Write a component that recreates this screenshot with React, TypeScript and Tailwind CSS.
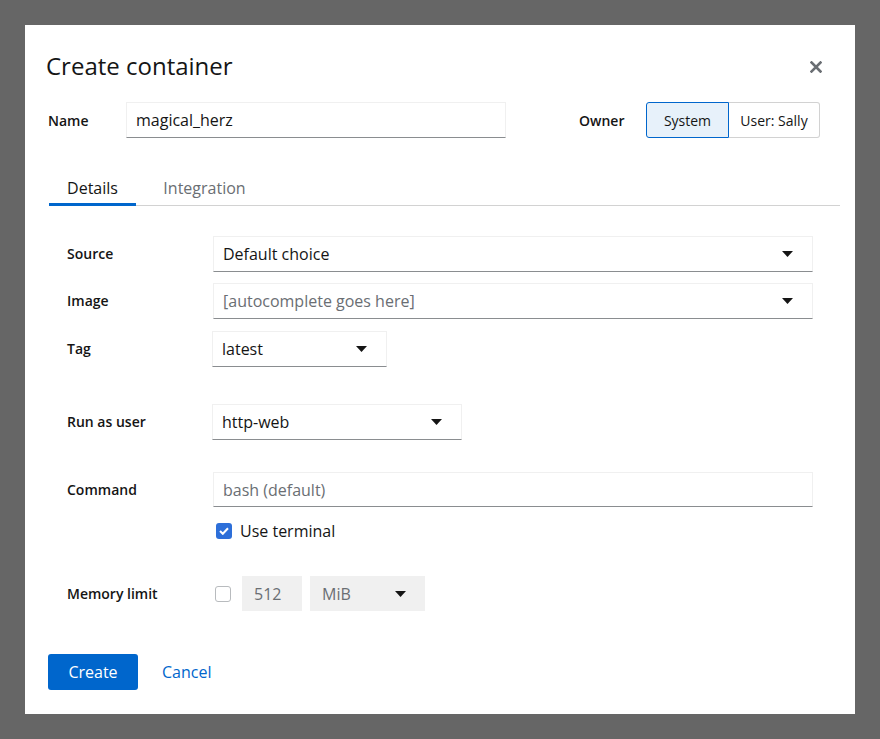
import React from "react";

const Caret = () => (
  <svg width="11" height="6" viewBox="0 0 11 6" className="fill-[#151515]">
    <path d="M0 0h11L5.5 6z" />
  </svg>
);

const fieldBorder =
  "border border-[#f0f0f0] border-b-[#8a8d90] bg-white";

type SelectProps = {
  value: string;
  className?: string;
  placeholder?: boolean;
};

const Select = ({ value, className = "", placeholder }: SelectProps) => (
  <div
    className={`flex h-[36px] items-center justify-between pl-[9px] pr-[19px] ${fieldBorder} ${className}`}
  >
    <span className={placeholder ? "text-[#6a6e73]" : "text-[#151515]"}>
      {value}
    </span>
    <Caret />
  </div>
);

const Label = ({ children }: { children: React.ReactNode }) => (
  <div className="w-[146px] shrink-0 text-[14px] font-semibold text-[#151515]">
    {children}
  </div>
);

export default function App() {
  return (
    <div
      className="h-[739px] w-[880px] bg-[#666666] p-[25px]"
      style={{ fontFamily: '"Open Sans", "Liberation Sans", sans-serif' }}
    >
      <div className="relative h-[689px] w-[830px] bg-white px-[23px] pt-[24px] text-[16px] text-[#151515]">
        {/* header */}
        <div className="flex items-center justify-between">
          <h1 className="-ml-[2px] text-[24px] leading-[34px] text-[#151515]">
            Create container
          </h1>
          <button className="mr-[10px] mt-[2px] text-[#6a6e73]">
            <svg width="12" height="12" viewBox="0 0 12 12">
              <path
                d="M1.5 1.5l9 9M10.5 1.5l-9 9"
                stroke="currentColor"
                strokeWidth="2.6"
                strokeLinecap="square"
              />
            </svg>
          </button>
        </div>

        {/* name + owner */}
        <div className="mt-[19px] flex items-center">
          <div className="w-[78px] text-[14px] font-semibold">Name</div>
          <div
            className={`flex h-[36px] w-[380px] items-center px-[9px] ${fieldBorder}`}
          >
            magical_herz
          </div>
          <div className="ml-[73px] w-[67px] text-[14px] font-semibold">
            Owner
          </div>
          <div className="flex h-[36px] text-[14px]">
            <div className="flex w-[83px] items-center justify-center rounded-l-[3px] border border-[#0066cc] bg-[#e7f1fa]">
              System
            </div>
            <div className="flex w-[91px] items-center justify-center rounded-r-[3px] border border-l-0 border-[#d2d2d2]">
              User: Sally
            </div>
          </div>
        </div>

        {/* tabs */}
        <div className="mt-[32px] mr-[-8px] ml-[1px] flex h-[36px] border-b border-[#d2d2d2]">
          <div className="relative flex w-[87px] items-center justify-center text-[#151515]">
            Details
            <div className="absolute bottom-[-1px] left-0 right-0 h-[3px] bg-[#0066cc]" />
          </div>
          <div className="flex w-[137px] items-center justify-center text-[#6a6e73]">
            Integration
          </div>
        </div>

        {/* form */}
        <div className="ml-[19px] mt-[30px] w-[746px]">
          <div className="flex h-[35px] items-center">
            <Label>Source</Label>
            <Select value="Default choice" className="h-[35px] w-[600px]" />
          </div>
          <div className="mt-[12px] flex h-[35px] items-center">
            <Label>Image</Label>
            <Select
              value="[autocomplete goes here]"
              placeholder
              className="h-[35px] w-[600px]"
            />
          </div>
          <div className="mt-[13px] flex h-[35px] items-center">
            <Label>Tag</Label>
            <Select value="latest" className="-ml-px h-[35px] w-[175px]" />
          </div>
          <div className="mt-[38px] flex h-[35px] items-center">
            <Label>Run as user</Label>
            <Select value="http-web" className="-ml-px h-[35px] w-[250px]" />
          </div>
          <div className="mt-[33px] flex h-[35px] items-center">
            <Label>Command</Label>
            <div
              className={`flex h-[35px] w-[600px] items-center px-[9px] text-[#6a6e73] ${fieldBorder}`}
            >
              bash (default)
            </div>
          </div>
          <div className="mt-[12px] flex items-center pl-[149px]">
            <div className="flex h-[16px] w-[16px] items-center justify-center rounded-[3px] bg-[#2d6fd9]">
              <svg width="10" height="8" viewBox="0 0 10 8">
                <path
                  d="M1 4l2.8 2.8L9 1.2"
                  fill="none"
                  stroke="white"
                  strokeWidth="2"
                />
              </svg>
            </div>
            <span className="ml-[8px]">Use terminal</span>
          </div>
          <div className="mt-[33px] flex h-[35px] items-center">
            <Label>Memory limit</Label>
            <div className="ml-[2px] h-[16px] w-[16px] rounded-[3px] border border-[#b8bbbe] bg-white" />
            <div className="ml-[11px] flex h-[35px] w-[60px] items-center bg-[#f0f0f0] px-[12px] text-[#6a6e73]">
              512
            </div>
            <div className="ml-[8px] flex h-[35px] w-[115px] items-center justify-between bg-[#f0f0f0] pl-[12px] pr-[19px] text-[#6a6e73]">
              MiB
              <Caret />
            </div>
          </div>
        </div>

        {/* footer */}
        <div className="mt-[43px] flex items-center">
          <button className="h-[36px] w-[90px] rounded-[3px] bg-[#0066cc] text-white">
            Create
          </button>
          <button className="ml-[24px] text-[#0066cc]">Cancel</button>
        </div>
      </div>
    </div>
  );
}
